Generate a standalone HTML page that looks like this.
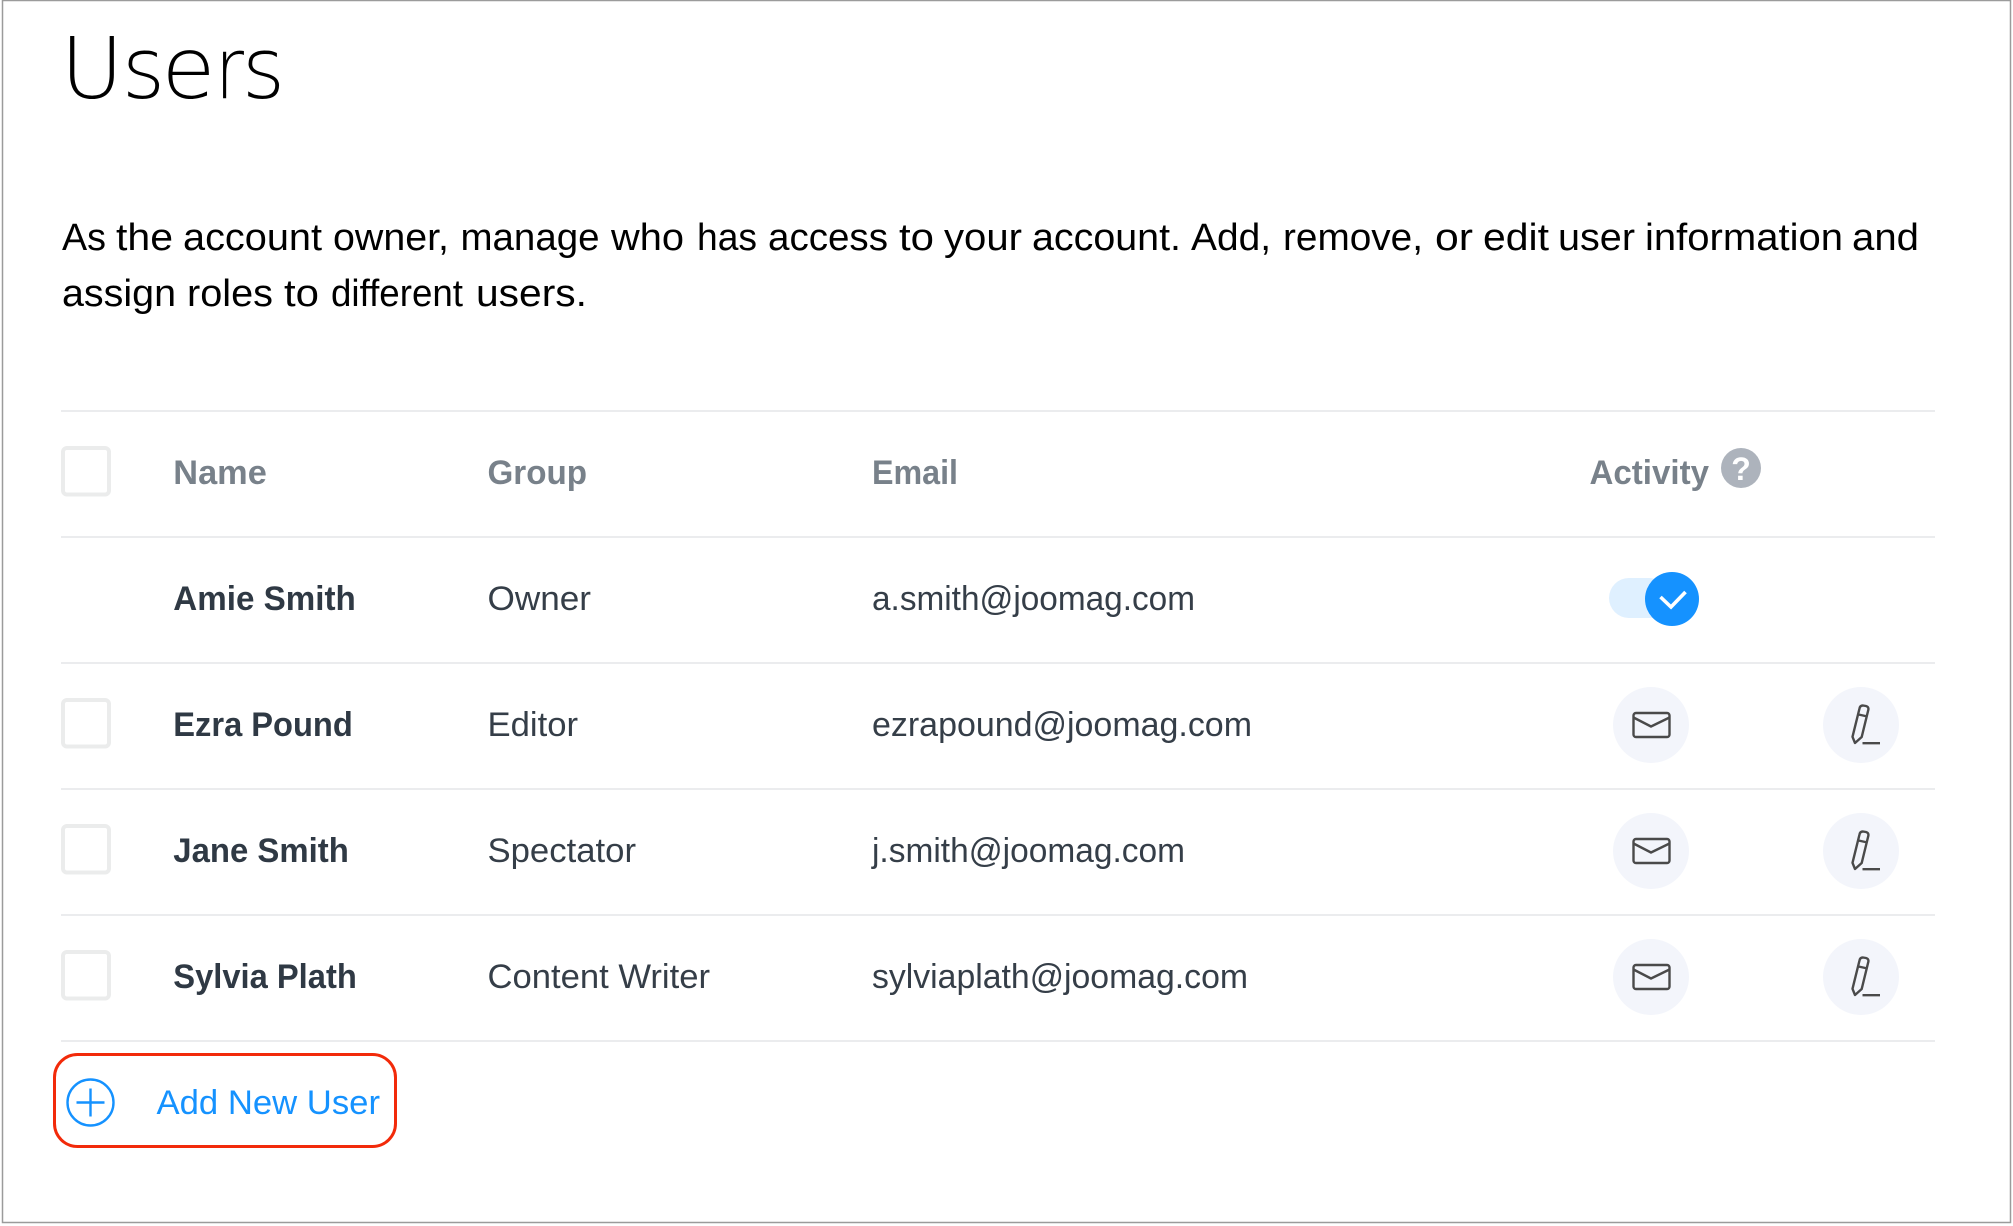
<!DOCTYPE html>
<html><head><meta charset="utf-8"><title>Users</title>
<style>
html,body{margin:0;padding:0;background:#fff;width:2013px;height:1226px;overflow:hidden}
svg{display:block}
text{font-family:"Liberation Sans",sans-serif}
.t{font-family:"DejaVu Sans",sans-serif;font-weight:200;font-size:84.5px;fill:#000}
.h{font-size:34px;font-weight:700;fill:#78818a}
.n{font-size:34px;font-weight:700;fill:#2f3944}
.r{font-size:34px;fill:#353e48}
.p{font-size:38px;fill:#000}
.ln{fill:#ebecee}
.cb{fill:#fff;stroke:#ebecec;stroke-width:4}
.ic{fill:none;stroke:#4a4a4a;stroke-width:2.4;stroke-linejoin:round}
</style></head>
<body>
<svg width="2013" height="1226" viewBox="0 0 2013 1226" xmlns="http://www.w3.org/2000/svg">
<rect x="2.5" y="0.5" width="2008" height="1222" fill="#fff" stroke="#9b9b9b" stroke-width="1.5"/>
<text class="t" x="60.5" y="98" textLength="63" lengthAdjust="spacingAndGlyphs">U</text>
<text class="t" x="122" y="98" textLength="43" lengthAdjust="spacingAndGlyphs">s</text>
<text class="t" x="161.5" y="98" textLength="54" lengthAdjust="spacingAndGlyphs">e</text>
<text class="t" x="215" y="98" textLength="29" lengthAdjust="spacingAndGlyphs">r</text>
<text class="t" x="242" y="98" textLength="43" lengthAdjust="spacingAndGlyphs">s</text>

<text class="p" x="62" y="250" textLength="44" lengthAdjust="spacingAndGlyphs">As</text>
<text class="p" x="116" y="250" textLength="57" lengthAdjust="spacingAndGlyphs">the</text>
<text class="p" x="183" y="250" textLength="139" lengthAdjust="spacingAndGlyphs">account</text>
<text class="p" x="333" y="250" textLength="116" lengthAdjust="spacingAndGlyphs">owner,</text>
<text class="p" x="460.5" y="250" textLength="139" lengthAdjust="spacingAndGlyphs">manage</text>
<text class="p" x="611" y="250" textLength="73" lengthAdjust="spacingAndGlyphs">who</text>
<text class="p" x="697" y="250" textLength="60" lengthAdjust="spacingAndGlyphs">has</text>
<text class="p" x="768" y="250" textLength="120" lengthAdjust="spacingAndGlyphs">access</text>
<text class="p" x="899" y="250" textLength="35" lengthAdjust="spacingAndGlyphs">to</text>
<text class="p" x="944" y="250" textLength="78" lengthAdjust="spacingAndGlyphs">your</text>
<text class="p" x="1032" y="250" textLength="149" lengthAdjust="spacingAndGlyphs">account.</text>
<text class="p" x="1191" y="250" textLength="80" lengthAdjust="spacingAndGlyphs">Add,</text>
<text class="p" x="1283" y="250" textLength="140" lengthAdjust="spacingAndGlyphs">remove,</text>
<text class="p" x="1435" y="250" textLength="38" lengthAdjust="spacingAndGlyphs">or</text>
<text class="p" x="1483" y="250" textLength="66" lengthAdjust="spacingAndGlyphs">edit</text>
<text class="p" x="1558" y="250" textLength="77" lengthAdjust="spacingAndGlyphs">user</text>
<text class="p" x="1645" y="250" textLength="198" lengthAdjust="spacingAndGlyphs">information</text>
<text class="p" x="1852" y="250" textLength="67" lengthAdjust="spacingAndGlyphs">and</text>

<text class="p" x="62" y="306" textLength="114" lengthAdjust="spacingAndGlyphs">assign</text>
<text class="p" x="187" y="306" textLength="86" lengthAdjust="spacingAndGlyphs">roles</text>
<text class="p" x="284" y="306" textLength="35" lengthAdjust="spacingAndGlyphs">to</text>
<text class="p" x="331" y="306" textLength="132" lengthAdjust="spacingAndGlyphs">different</text>
<text class="p" x="476" y="306" textLength="111" lengthAdjust="spacingAndGlyphs">users.</text>

<rect class="ln" x="61" y="410" width="1874" height="2"/>
<rect class="ln" x="61" y="536" width="1874" height="2"/>
<rect class="ln" x="61" y="662" width="1874" height="2"/>
<rect class="ln" x="61" y="788" width="1874" height="2"/>
<rect class="ln" x="61" y="914" width="1874" height="2"/>
<rect class="ln" x="61" y="1040" width="1874" height="2"/>
<rect class="cb" x="63" y="448" width="46" height="46.5" rx="4"/>
<rect class="cb" x="63" y="700" width="46" height="46.5" rx="4"/>
<rect class="cb" x="63" y="826" width="46" height="46.5" rx="4"/>
<rect class="cb" x="63" y="952" width="46" height="46.5" rx="4"/>
<text class="h" x="173.3" y="484" textLength="93.5" lengthAdjust="spacingAndGlyphs">Name</text>
<text class="h" x="487.5" y="484" textLength="99.5" lengthAdjust="spacingAndGlyphs">Group</text>
<text class="h" x="872" y="484" textLength="86" lengthAdjust="spacingAndGlyphs">Email</text>
<text class="h" x="1589.5" y="484" textLength="119.5" lengthAdjust="spacingAndGlyphs">Activity</text>
<circle cx="1741" cy="468" r="20" fill="#adb3bc"/>
<text x="1741" y="480" font-size="32" font-weight="700" fill="#fff" text-anchor="middle">?</text>
<text class="n" x="173.3" y="610" textLength="182.5" lengthAdjust="spacingAndGlyphs">Amie Smith</text>
<text class="r" x="487.5" y="610" textLength="103.5" lengthAdjust="spacingAndGlyphs">Owner</text>
<text class="r" x="872" y="610" textLength="323" lengthAdjust="spacingAndGlyphs">a.smith@joomag.com</text>
<rect x="1609" y="578" width="60" height="40" rx="20" fill="#dff0ff"/>
<circle cx="1672" cy="599" r="27" fill="#1592ff"/>
<path d="M1660.5 597 L1671 607 L1685.5 592" fill="none" stroke="#fff" stroke-width="3.6"/>
<text class="n" x="173.3" y="736" textLength="179.5" lengthAdjust="spacingAndGlyphs">Ezra Pound</text>
<text class="r" x="487.5" y="736" textLength="90.5" lengthAdjust="spacingAndGlyphs">Editor</text>
<text class="r" x="872" y="736" textLength="380" lengthAdjust="spacingAndGlyphs">ezrapound@joomag.com</text>
<text class="n" x="173.3" y="862" textLength="175.5" lengthAdjust="spacingAndGlyphs">Jane Smith</text>
<text class="r" x="487.5" y="862" textLength="148.5" lengthAdjust="spacingAndGlyphs">Spectator</text>
<text class="r" x="872" y="862" textLength="313" lengthAdjust="spacingAndGlyphs">j.smith@joomag.com</text>
<text class="n" x="173.3" y="988" textLength="183.5" lengthAdjust="spacingAndGlyphs">Sylvia Plath</text>
<text class="r" x="487.5" y="988" textLength="222.5" lengthAdjust="spacingAndGlyphs">Content Writer</text>
<text class="r" x="872" y="988" textLength="376" lengthAdjust="spacingAndGlyphs">sylviaplath@joomag.com</text>
<defs>
<g id="mail"><circle cx="1651" cy="725" r="38" fill="#f3f5fb"/>
<rect class="ic" x="1633.5" y="713" width="36" height="24" rx="2.5"/>
<path class="ic" d="M1633.5 717.5 L1651 726.5 L1669.5 717.5"/></g>
<g id="pen"><circle cx="1861" cy="725" r="38" fill="#f3f5fb"/>
<path class="ic" d="M1859.5 708.5 Q1860 705.5 1863 705.5 L1866 706 Q1868.8 706.8 1868.4 709.5 L1861.7 737 L1855 743 L1852.5 736.8 Z M1858.5 714.5 L1867.5 716.5"/>
<path d="M1862.5 743.2 H1880" stroke="#4a4a4a" stroke-width="2.4" fill="none"/></g>
</defs>
<use href="#mail"/><use href="#pen"/>
<use href="#mail" y="126"/><use href="#pen" y="126"/>
<use href="#mail" y="252"/><use href="#pen" y="252"/>
<rect x="54.5" y="1054.5" width="341" height="92" rx="23" fill="none" stroke="#f22a0a" stroke-width="3"/>
<circle cx="90.5" cy="1102.5" r="23" fill="none" stroke="#1592ff" stroke-width="2.4"/>
<path d="M76.5 1102.5 H104.5 M90.5 1088.5 V1116.5" fill="none" stroke="#1592ff" stroke-width="2.4"/>
<text x="156.5" y="1114" font-size="34" fill="#1592ff" textLength="223.5" lengthAdjust="spacingAndGlyphs">Add New User</text>
</svg>
</body></html>
